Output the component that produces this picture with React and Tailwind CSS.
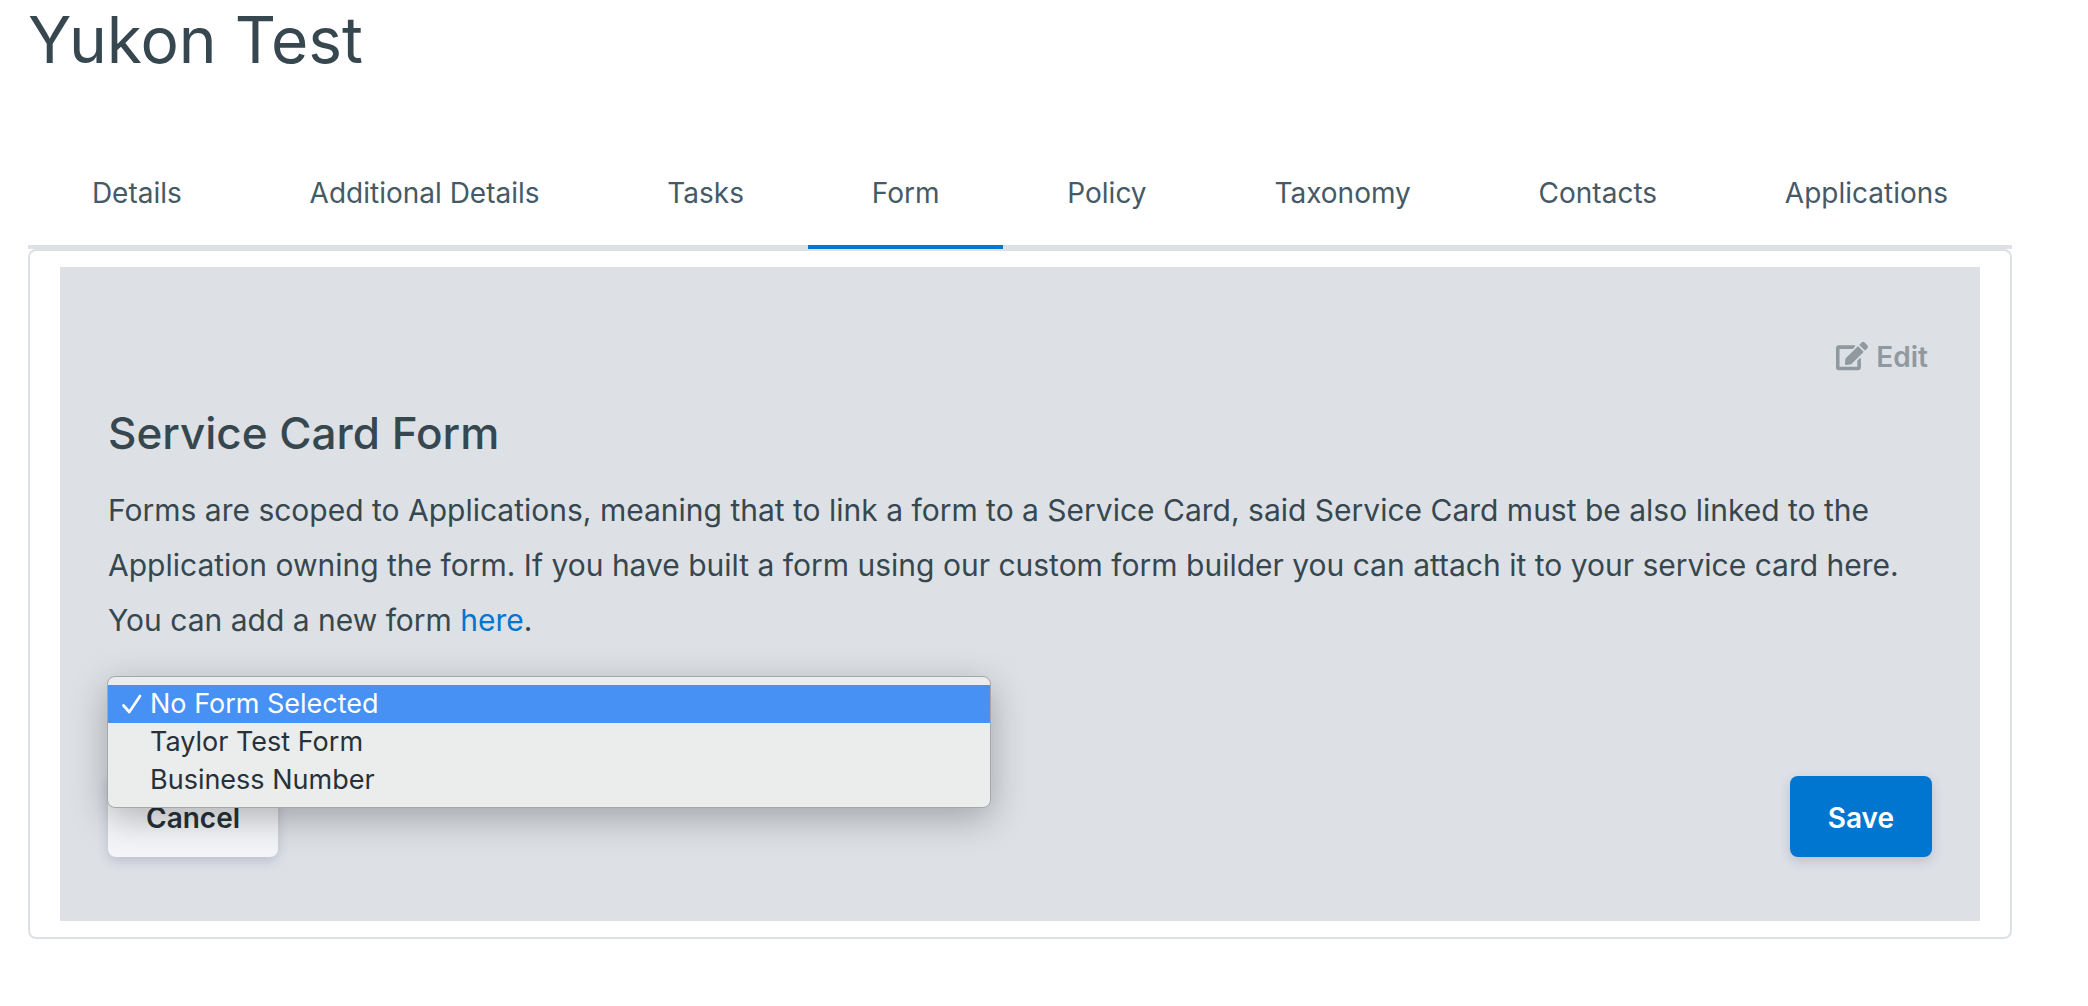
import { useState } from "react";
import { FaEdit } from "react-icons/fa";

const tabs = [
  "Details",
  "Additional Details",
  "Tasks",
  "Form",
  "Policy",
  "Taxonomy",
  "Contacts",
  "Applications",
];

const forms = ["No Form Selected", "Taylor Test Form", "Business Number"];

function TabBar({ active, onSelect }) {
  return (
    <div role="tablist" className="flex">
      {tabs.map((tab) => (
        <button
          key={tab}
          type="button"
          role="tab"
          aria-selected={tab === active}
          onClick={() => onSelect(tab)}
          className={
            "flex-auto border-b-4 pt-6 pb-8 text-[28px] leading-10 text-[#455a66] " +
            (tab === active ? "border-[#0076d1]" : "border-[#dde1e6]")
          }
        >
          {tab}
        </button>
      ))}
    </div>
  );
}

function FormSelect() {
  const [selected, setSelected] = useState(forms[0]);
  return (
    <div className="relative w-[882px] max-w-full">
      <select
        aria-label="Form"
        value={selected}
        onChange={(event) => setSelected(event.target.value)}
        className="h-16 w-full px-4 text-[27px]"
      >
        {forms.map((form) => (
          <option key={form}>{form}</option>
        ))}
      </select>
      <div
        role="listbox"
        aria-label="Form options"
        className="absolute -inset-x-px -top-4 rounded-lg border border-[#a4a8ac] bg-[#ebecec] pt-2 pb-2 shadow-[0_10px_36px_rgba(0,0,0,0.28)]"
      >
        {forms.map((form) => (
          <button
            key={form}
            type="button"
            role="option"
            aria-selected={form === selected}
            onClick={() => setSelected(form)}
            className={
              "flex h-[38px] w-full items-center pl-3 text-left text-[27px] leading-9 " +
              (form === selected ? "bg-[#4791f4] text-white" : "text-[#263238]")
            }
          >
            <span className="flex w-[30px] shrink-0">
              {form === selected && (
                <svg
                  viewBox="0 0 22 22"
                  className="size-[22px]"
                  fill="none"
                  stroke="currentColor"
                  strokeWidth="2.7"
                  strokeLinecap="round"
                  strokeLinejoin="round"
                  aria-hidden="true"
                >
                  <path d="M3.5 12.5 L9.3 19 L20 3" />
                </svg>
              )}
            </span>
            {form}
          </button>
        ))}
      </div>
    </div>
  );
}

export default function App() {
  const [active, setActive] = useState("Form");
  return (
    <main className="min-h-screen bg-white pr-[76px] pl-7 font-['Inter',sans-serif] text-[#37474f]">
      <h1 className="text-[64px] leading-[80px]">Yukon Test</h1>
      <div className="pt-[69px]">
        <TabBar active={active} onSelect={setActive} />
        <section className="rounded-lg border-2 border-[#dde1e6] px-[30px] py-4">
          <div className="bg-[#dde1e6] px-12 pt-[70px] pb-16">
            <div className="flex justify-end">
              <button
                type="button"
                className="flex items-center gap-2 pr-1 text-[28px] leading-10 font-semibold text-[#90999f]"
              >
                <FaEdit className="mb-0.5 size-8" aria-hidden="true" />
                Edit
              </button>
            </div>
            <h2 className="pt-[26px] text-[44px] leading-[60px] font-medium">Service Card Form</h2>
            <p className="pt-5 text-[30px] leading-[55px]">
              Forms are scoped to Applications, meaning that to link a form to a Service Card, said
              Service Card must be also linked to the Application owning the form. If you have built
              a form using our custom form builder you can attach it to your service card here. You
              can add a new form{" "}
              <a href="#" className="text-[#0076d1]">
                here
              </a>
              .
            </p>
            <div className="pt-11">
              <FormSelect />
            </div>
            <div className="flex justify-between pt-5">
              <button
                type="button"
                className="rounded-lg bg-[#f4f5f8] px-[38px] pt-[22px] pb-[18px] text-[28px] leading-[41px] font-semibold text-[#263238] shadow-[0_4px_12px_rgba(60,50,110,0.2)]"
              >
                Cancel
              </button>
              <button
                type="button"
                className="rounded-lg bg-[#0076d1] px-[38px] pt-[22px] pb-[18px] text-[28px] leading-[41px] font-semibold text-white shadow-[0_4px_12px_rgba(60,50,110,0.2)]"
              >
                Save
              </button>
            </div>
          </div>
        </section>
      </div>
    </main>
  );
}
